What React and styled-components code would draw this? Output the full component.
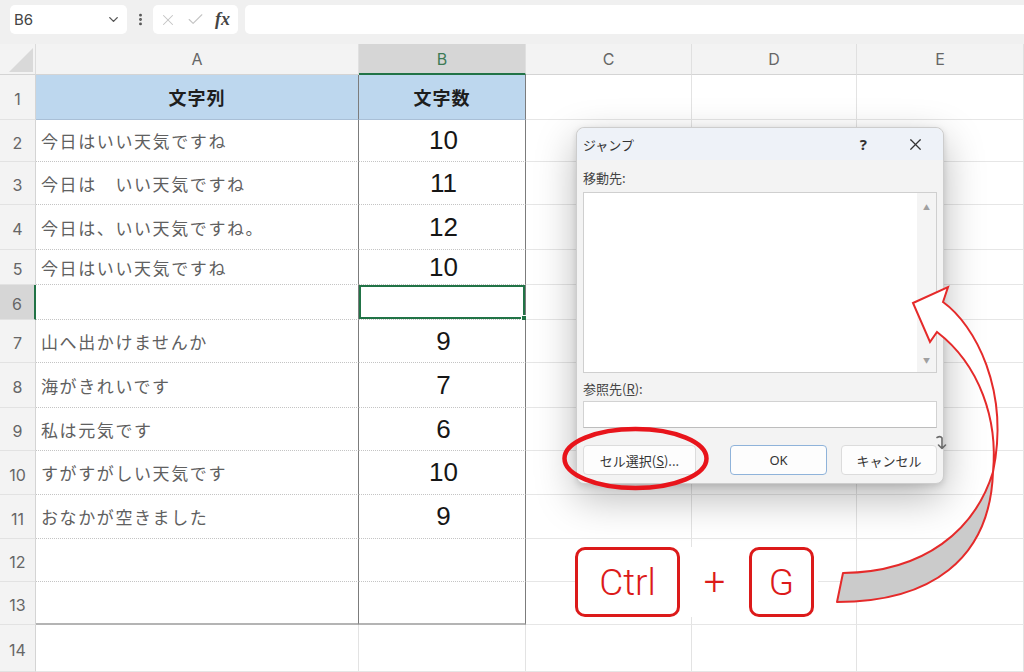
import styled, { createGlobalStyle } from "styled-components";
import { ChevronDown, X, Check, EllipsisVertical } from "lucide-react";

const GlobalStyle = createGlobalStyle`
  html, body { margin: 0; padding: 0; }
  body {
    width: 1024px;
    height: 672px;
    overflow: hidden;
    background: #fff;
    font-family: "Noto Sans CJK JP", "Noto Sans", sans-serif;
  }
`;

const Page = styled.div`
    position: relative;
    width: 1024px;
    height: 672px;
    overflow: hidden;
    display: flex;
    flex-direction: column;
`;

// ---------- formula bar ----------
const Toolbar = styled.div`
    display: flex;
    align-items: flex-start;
    height: 44px;
    box-sizing: border-box;
    padding: 5px 0 0 10px;
    background: #f0f0f0;
`;

const NameBox = styled.div`
    display: flex;
    align-items: center;
    justify-content: space-between;
    width: 117px;
    height: 29px;
    box-sizing: border-box;
    padding: 0 6px 0 4px;
    background: #fff;
    border-radius: 5px;
    font-family: "Inter", sans-serif;
    font-size: 15px;
    color: #444;
`;

const Dots = styled.div`
    display: flex;
    align-items: center;
    justify-content: center;
    width: 26px;
    height: 29px;
    color: #555;
`;

const FxBox = styled.div`
    display: flex;
    align-items: center;
    gap: 9px;
    width: 85px;
    height: 29px;
    box-sizing: border-box;
    padding: 0 6px;
    background: #fff;
    border-radius: 5px;
    color: #c4c4c4;
`;

const FxLabel = styled.span`
    font-family: "Liberation Serif", serif;
    font-style: italic;
    font-weight: bold;
    font-size: 18px;
    color: #444;
    margin-left: 1px;
`;

const FormulaInput = styled.div`
    flex: 1;
    height: 29px;
    margin-left: 7px;
    background: #fff;
    border-radius: 5px 0 0 5px;
`;

// ---------- sheet ----------
const Sheet = styled.div`
    display: grid;
    grid-template-columns: 36px 323px 167px 166px 165px 167px;
    grid-template-rows: 31px 45px 42px 43px 45px 35px 35px 43px 45px 43px 44px 44px 43px 43px 47px;
`;

const Corner = styled.div`
    position: relative;
    background: #f3f3f3;
    border-right: 1px solid #dcdcdc;
    border-bottom: 1px solid #d4d4d4;
    &::after {
        content: "";
        position: absolute;
        right: 2px;
        bottom: 2px;
        width: 0;
        height: 0;
        border-left: 24px solid transparent;
        border-bottom: 24px solid #d9d9d9;
    }
`;

const ColHead = styled.div`
    display: flex;
    align-items: center;
    justify-content: center;
    background: ${(p) => (p.$active ? "#d6d6d6" : "#f3f3f3")};
    border-right: 1px solid #e0e0e0;
    border-bottom: ${(p) => (p.$active ? "2px solid #217346" : "1px solid #d4d4d4")};
    box-sizing: border-box;
    font-family: "Inter", sans-serif;
    font-size: 16px;
    color: ${(p) => (p.$active ? "#3d7a55" : "#666")};
`;

const RowHead = styled.div`
    display: flex;
    align-items: center;
    justify-content: center;
    padding-top: 4px;
    box-sizing: border-box;
    background: ${(p) => (p.$active ? "#d6d6d6" : "#f3f3f3")};
    border-right: ${(p) => (p.$active ? "2px solid #217346" : "1px solid #d4d4d4")};
    border-bottom: 1px solid #e2e2e2;
    font-family: "Inter", sans-serif;
    font-size: 16px;
    color: #666;
`;

const Cell = styled.div`
    position: relative;
    display: flex;
    align-items: center;
    box-sizing: border-box;
    justify-content: ${(p) => (p.$center ? "center" : "flex-start")};
    padding-left: ${(p) => (p.$center ? "0" : "5px")};
    background: ${(p) => (p.$head ? "#bdd7ee" : "#fff")};
    border-right: ${(p) => (p.$inTable ? "1px solid #7c7c7c" : "1px solid #e3e3e3")};
    border-bottom: ${(p) =>
        p.$last ? "2px solid #b4b4b4" : p.$head ? "1px solid #a9bfd6" : p.$inTable ? "1px dotted #c4c4c4" : "1px solid #e6e6e6"};
    box-shadow: ${(p) => (p.$selected ? "inset 0 0 0 2px #217346" : "none")};
    ${(p) =>
        p.$selected &&
        `&::after {
            content: "";
            position: absolute;
            right: -3px;
            bottom: -3px;
            width: 5px;
            height: 5px;
            background: #217346;
            border: 1px solid #fff;
        }`}
`;

const TextA = styled.span`
    font-size: 17px;
    letter-spacing: 1.6px;
    color: #606060;
    white-space: pre;
`;

const HeadText = styled.span`
    font-size: 18px;
    font-weight: bold;
    letter-spacing: 1px;
    color: #1e1e1e;
`;

const Num = styled.span`
    font-family: "Liberation Sans", Arial, sans-serif;
    font-size: 26px;
    color: #161616;
    margin-left: 3px;
`;

// ---------- dialog ----------
const Dialog = styled.div`
    position: absolute;
    left: 576px;
    top: 127px;
    width: 368px;
    height: 357px;
    box-sizing: border-box;
    background: #f3f3f3;
    border: 1px solid #cdcdcd;
    border-radius: 8px;
    box-shadow: 0 14px 40px rgba(0, 0, 0, 0.28), 0 2px 6px rgba(0, 0, 0, 0.12);
    font-size: 13px;
    color: #333;
`;

const TitleBar = styled.div`
    display: flex;
    align-items: center;
    height: 32px;
    padding: 0 6px;
    background: #eef2f8;
    border-radius: 8px 8px 0 0;
`;

const Title = styled.span`
    flex: 1;
    font-size: 13px;
    color: #333;
`;

const HelpMark = styled.span`
    font-family: "Noto Sans", sans-serif;
    font-weight: bold;
    font-size: 15px;
    color: #333;
    margin-right: 39px;
`;

const DialogBody = styled.div`
    display: flex;
    flex-direction: column;
    padding: 9px 6px 0 6px;
`;

const FieldLabel = styled.div`
    height: 18px;
    line-height: 18px;
    font-size: 13px;
    color: #444;
    margin-top: ${(p) => p.$mt || 0}px;
    margin-bottom: ${(p) => p.$mb || 0}px;
    u { text-decoration: underline; }
`;

const ListBox = styled.div`
    display: flex;
    height: 181px;
    box-sizing: border-box;
    background: #fff;
    border: 1px solid #cfcfcf;
`;

const ListArea = styled.div`
    flex: 1;
`;

const ScrollTrack = styled.div`
    display: flex;
    flex-direction: column;
    justify-content: space-between;
    align-items: center;
    width: 19px;
    padding: 9px 0 7px;
    background: #f4f4f4;
    font-size: 7px;
    color: #a0a0a0;
`;

const TextInput = styled.div`
    height: 27px;
    box-sizing: border-box;
    margin-top: 3px;
    background: #fff;
    border: 1px solid #d2d2d2;
    border-bottom-color: #bdbdbd;
`;

const ButtonRow = styled.div`
    display: flex;
    gap: 14px;
    margin-top: 17px;
`;

const Button = styled.div`
    display: flex;
    align-items: center;
    justify-content: center;
    width: ${(p) => p.$w}px;
    height: 30px;
    box-sizing: border-box;
    margin-right: ${(p) => p.$mr || 0}px;
    background: #fdfdfd;
    border: 1px solid ${(p) => (p.$primary ? "#8fb3da" : "#dcdcdc")};
    border-radius: 4px;
    font-family: ${(p) => (p.$latin ? '"Noto Sans", sans-serif' : '"Noto Sans CJK JP", sans-serif')};
    font-size: 13px;
    color: #333;
    u { text-decoration: underline; }
`;

const Grip = styled.svg`
    position: absolute;
    right: -5px;
    bottom: 32px;
`;

// ---------- annotation ----------
const Overlay = styled.svg`
    position: absolute;
    left: 0;
    top: 0;
    pointer-events: none;
`;

const KeyGroup = styled.div`
    position: absolute;
    left: 575px;
    top: 547px;
    display: flex;
    align-items: center;
    padding-right: 4px;
    background: #fff;
`;

const Key = styled.div`
    display: flex;
    align-items: center;
    justify-content: center;
    width: ${(p) => p.$w}px;
    height: 70px;
    box-sizing: border-box;
    border: 3px solid #dc1a1a;
    border-radius: 10px;
    background: #fff;
    font-family: "Roboto", "Noto Sans", sans-serif;
    font-weight: 300;
    font-size: 37px;
    color: #dc1a1a;
`;

const Plus = styled.div`
    width: 69px;
    text-align: center;
    font-family: "Roboto", "Noto Sans", sans-serif;
    font-weight: 300;
    font-size: 38px;
    color: #dc1a1a;
`;

const rows = [
    { a: "文字列", b: "文字数", head: true },
    { a: "今日はいい天気ですね", b: "10" },
    { a: "今日は　いい天気ですね", b: "11" },
    { a: "今日は、いい天気ですね。", b: "12" },
    { a: "今日はいい天気ですね", b: "10" },
    { a: "", b: "", selected: true },
    { a: "山へ出かけませんか", b: "9" },
    { a: "海がきれいです", b: "7" },
    { a: "私は元気です", b: "6" },
    { a: "すがすがしい天気です", b: "10" },
    { a: "おなかが空きました", b: "9" },
    { a: "", b: "" },
    { a: "", b: "", last: true },
    { a: "", b: "", outside: true },
];

const columns = ["A", "B", "C", "D", "E"];

const App = () => {
    return (
        <Page>
            <GlobalStyle />
            <Toolbar>
                <NameBox>
                    <span>B6</span>
                    <ChevronDown size={15} color="#555" strokeWidth={2.2} />
                </NameBox>
                <Dots>
                    <EllipsisVertical size={15} strokeWidth={2.6} />
                </Dots>
                <FxBox>
                    <X size={18} strokeWidth={1.4} />
                    <Check size={19} strokeWidth={1.4} />
                    <FxLabel>fx</FxLabel>
                </FxBox>
                <FormulaInput />
            </Toolbar>

            <Sheet>
                <Corner />
                {columns.map((c) => (
                    <ColHead key={c} $active={c === "B"}>{c}</ColHead>
                ))}
                {rows.map((r, i) => {
                    const inTable = !r.outside;
                    return [
                        <RowHead key={`h${i}`} $active={r.selected}>{i + 1}</RowHead>,
                        <Cell key={`a${i}`} $inTable={inTable} $head={r.head} $last={r.last} $center={r.head}>
                            {r.head ? <HeadText>{r.a}</HeadText> : <TextA>{r.a}</TextA>}
                        </Cell>,
                        <Cell key={`b${i}`} $inTable={inTable} $head={r.head} $last={r.last} $selected={r.selected} $center>
                            {r.head ? <HeadText>{r.b}</HeadText> : <Num>{r.b}</Num>}
                        </Cell>,
                        <Cell key={`c${i}`} />,
                        <Cell key={`d${i}`} />,
                        <Cell key={`e${i}`} />,
                    ];
                })}
            </Sheet>

            <Dialog>
                <TitleBar>
                    <Title>ジャンプ</Title>
                    <HelpMark>?</HelpMark>
                    <X size={19} strokeWidth={1.5} color="#333" style={{ marginRight: 12 }} />
                </TitleBar>
                <DialogBody>
                    <FieldLabel $mb={5}>移動先:</FieldLabel>
                    <ListBox>
                        <ListArea />
                        <ScrollTrack>
                            <span>▲</span>
                            <span>▼</span>
                        </ScrollTrack>
                    </ListBox>
                    <FieldLabel $mt={7}>参照先(<u>R</u>):</FieldLabel>
                    <TextInput />
                    <ButtonRow>
                        <Button $w={113} $mr={20}>セル選択(<u>S</u>)...</Button>
                        <Button $w={97} $primary $latin>OK</Button>
                        <Button $w={96}>キャンセル</Button>
                    </ButtonRow>
                </DialogBody>
                <Grip width="14" height="17" viewBox="0 0 14 17">
                    <path d="M3 3.5 Q6.5 1.5 8 4 L8 14.5 M4.5 11 L8 14.5 L11.5 11" fill="none" stroke="#6a6a6a" strokeWidth="1.6" strokeLinecap="round" strokeLinejoin="round" />
                </Grip>
            </Dialog>

            <Overlay width="1024" height="672" viewBox="0 0 1024 672">
                <ellipse cx="635.5" cy="458.5" rx="71" ry="29.5" fill="none" stroke="#e8141b" strokeWidth="4.5" />
                <path
                    d="M993,472 C990,560 930,602 837,602 L843,573 C925,572 975,530 993,472 Z"
                    fill="#cbcbcb"
                    stroke="#e52a2a"
                    strokeWidth="2"
                    strokeLinejoin="round"
                />
                <path
                    d="M913,303 L948,287 L943,302 C975,325 1010,390 993,472 C998,420 980,365 937,332 L930,342 Z"
                    fill="#fff"
                    stroke="#e52a2a"
                    strokeWidth="2"
                    strokeLinejoin="miter"
                />
            </Overlay>

            <KeyGroup>
                <Key $w={105}>Ctrl</Key>
                <Plus>+</Plus>
                <Key $w={65}>G</Key>
            </KeyGroup>
        </Page>
    );
};

export default App;
